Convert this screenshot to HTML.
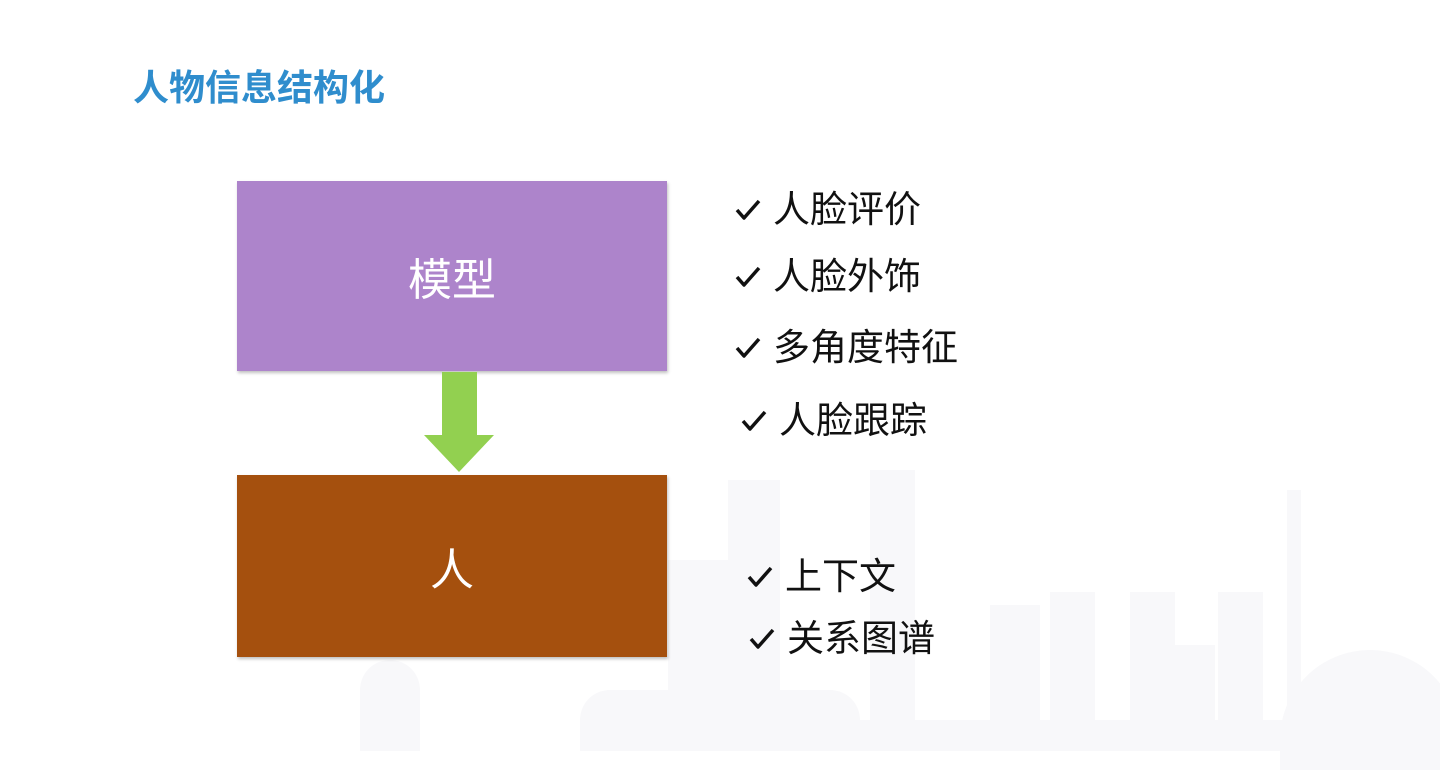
<!DOCTYPE html>
<html><head><meta charset="utf-8"><style>
html,body{margin:0;padding:0}
body{width:1440px;height:751px;position:relative;overflow:hidden;background:#fff;font-family:"Liberation Sans","Noto Sans CJK SC",sans-serif}
.t{position:absolute;left:133px;top:64px;font-size:36px;font-weight:bold;color:#2f8dcd;line-height:48px;white-space:nowrap}
.box{position:absolute;left:237px;width:430px;color:#fff;font-size:44px;display:flex;align-items:center;justify-content:center;box-shadow:1px 2px 3px rgba(0,0,0,.25)}
.i{position:absolute;font-size:37px;color:#111;line-height:44px;white-space:nowrap;padding-left:40px}
.i svg{position:absolute;left:2px;top:11px}
.sk{position:absolute;background:#f8f8fa}
</style></head><body>
<div class="sk" style="left:728px;top:480px;width:52px;height:271px"></div>
<div class="sk" style="left:870px;top:470px;width:45px;height:281px"></div>
<div class="sk" style="left:668px;top:560px;width:70px;height:191px"></div>
<div class="sk" style="left:990px;top:605px;width:50px;height:146px"></div>
<div class="sk" style="left:1050px;top:592px;width:45px;height:159px"></div>
<div class="sk" style="left:1130px;top:592px;width:45px;height:159px"></div>
<div class="sk" style="left:1165px;top:645px;width:50px;height:106px"></div>
<div class="sk" style="left:1218px;top:592px;width:45px;height:159px"></div>
<div class="sk" style="left:1287px;top:490px;width:14px;height:261px"></div>
<div class="sk" style="left:1280px;top:650px;width:180px;height:120px;border-radius:90px 90px 0 0"></div>
<div class="sk" style="left:580px;top:690px;width:280px;height:61px;border-radius:30px 30px 0 0"></div>
<div class="sk" style="left:360px;top:660px;width:60px;height:91px;border-radius:30px 30px 0 0"></div>
<div class="sk" style="left:810px;top:720px;width:480px;height:31px"></div>

<div class="t">人物信息结构化</div>
<div class="box" style="top:181px;height:190px;background:#ad84cb">模型</div>
<div style="position:absolute;left:442px;top:372px;width:35px;height:64px;background:#92d050"></div>
<div style="position:absolute;left:424px;top:435px;width:0;height:0;border-left:35px solid transparent;border-right:35px solid transparent;border-top:37px solid #92d050"></div>
<div class="box" style="top:475px;height:182px;background:#a5500e">人</div>

<div class="i" style="left:733px;top:188px"><svg width="26" height="22" viewBox="0 0 26 22"><path d="M2 11 L9 19 L24 2" fill="none" stroke="#111" stroke-width="3.5" stroke-linejoin="round"/></svg>人脸评价</div>
<div class="i" style="left:733px;top:255px"><svg width="26" height="22" viewBox="0 0 26 22"><path d="M2 11 L9 19 L24 2" fill="none" stroke="#111" stroke-width="3.5" stroke-linejoin="round"/></svg>人脸外饰</div>
<div class="i" style="left:733px;top:326px"><svg width="26" height="22" viewBox="0 0 26 22"><path d="M2 11 L9 19 L24 2" fill="none" stroke="#111" stroke-width="3.5" stroke-linejoin="round"/></svg>多角度特征</div>
<div class="i" style="left:739px;top:399px"><svg width="26" height="22" viewBox="0 0 26 22"><path d="M2 11 L9 19 L24 2" fill="none" stroke="#111" stroke-width="3.5" stroke-linejoin="round"/></svg>人脸跟踪</div>
<div class="i" style="left:745px;top:555px"><svg width="26" height="22" viewBox="0 0 26 22"><path d="M2 11 L9 19 L24 2" fill="none" stroke="#111" stroke-width="3.5" stroke-linejoin="round"/></svg>上下文</div>
<div class="i" style="left:747px;top:617px"><svg width="26" height="22" viewBox="0 0 26 22"><path d="M2 11 L9 19 L24 2" fill="none" stroke="#111" stroke-width="3.5" stroke-linejoin="round"/></svg>关系图谱</div>
</body></html>
